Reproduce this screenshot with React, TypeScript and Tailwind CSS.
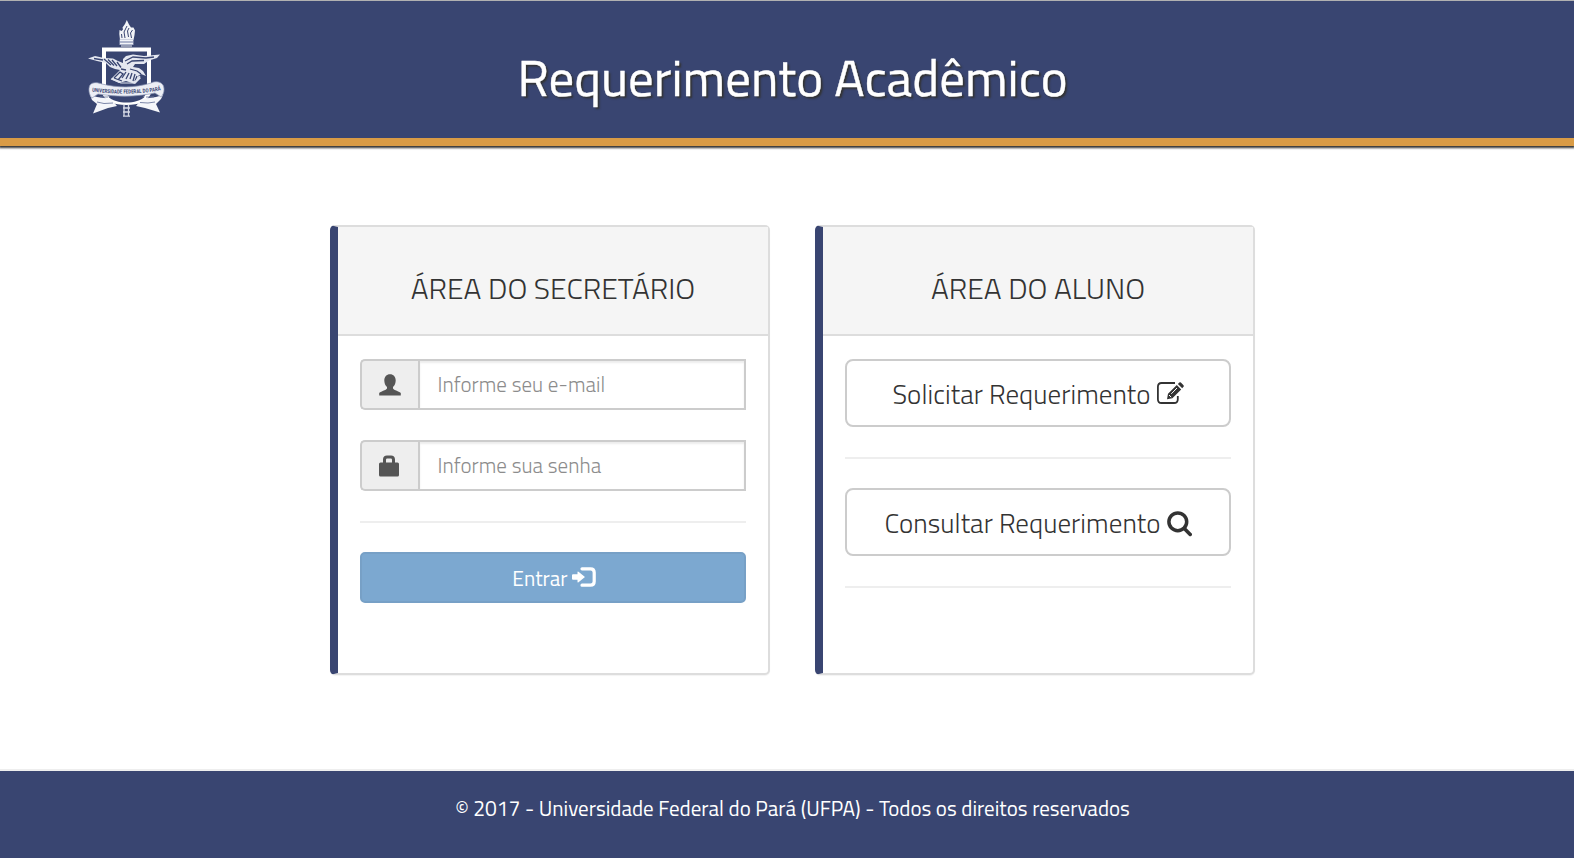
import React from "react";

function Crest() {
  return (
    <svg viewBox="0 0 84 106" className="h-[106px] w-[84px]" fill="none" role="img" aria-label="UFPA">
      {/* torch */}
      <path d="M36 24 35.300 18 35.500 14 37.500 15 39 13.500 38.500 11.500 41 8 42.800 4 45 8.500 47 11.500 49.500 11.500 51 14.500 50.500 19 49.500 24Z" fill="#f2f4f8" />
      <path d="M38 22 37.500 18M41 22 40 16 43 10M44.500 21 43.500 15 45 12M47.500 22 46.500 17 48.500 14" stroke="#394571" strokeWidth="1" />
      <path d="M35.500 23.500h14v5.500h-14z" fill="#aeb5cd" />
      <path d="M36 24.500h13M36 27.500h13M37 30h11" stroke="#f2f4f8" strokeWidth="1" />
      {/* shield */}
      <path d="M20 33.500H65V77C62 84 53 87 42.500 87 32 87 23 84 20 77Z" stroke="#fff" strokeWidth="4" />
      {/* eagle */}
      <path d="M4 42.500 11 40 20 42 29 42.500 34 45 39 47 39 43 42 40 49 38.500 60 40 76 38.500 73 42 65 44.500 60 48 51 48 49 51 55 52 59 55 62 60 57 58 54 60 57 62 51 68 42 65 35 67 27 63 31 59 36 54 31 53 26 51 22 47 13 45Z" fill="#e4e7f0" />
      <path d="m10 42.500 9 1.500M20 43l7 6M24 43.500l6 6M28 44l5 6M33 46l4 5.500M41 45l8-4 13 1 8-1M43 48l5-3 12-.5M37 53l5 1M46 53l7 2 4 3M30 62l6-6 3 2-5 6M42 56l-4 6M45 57l-3 6M48 57l-2 6M51 58l-2 7M30 62l8 3M53 60l-2 5" stroke="#394571" strokeWidth="1.300" />
      <path d="M27 63 37 67 50 67 56 60" stroke="#dfe3ed" strokeWidth="1.200" />
      {/* ribbon tails */}
      <path d="M6 79 13 81 27 83 33 90 24 92 9 97.500 13 88 8 84Z" fill="#f5f6fa" />
      <path d="M79 79 72 81 58 83 52 90 61 92 76 96.500 72 88 77 83Z" fill="#f5f6fa" />
      <path d="M24 80.500C32 88.500 53 88.500 61 80.500 50 83.500 35 83.500 24 80.500Z" fill="#394571" />
      <path d="M13 86 20 87.500 29 87M71 86 64 87 56 86.500M16 81l8 0M70 81l-8 0" stroke="#6f7a9f" strokeWidth=".9" />
      {/* ribbon */}
      <path d="M6 69C9 65.500 14 66.500 18 68 34 72 51 72 67 67 71 65 76 65 79 69 81 73 80 78 77 81L71 77C52 81 33 81 14 78L8 82C5 79 4 73 6 69Z" fill="#eceef5" stroke="#8d96b5" strokeWidth=".7" />
      <path id="motto" d="M8 75.500C29 78.500 56 78.500 78 74" />
      <text fill="#394571" textLength="69" lengthAdjust="spacingAndGlyphs" className="font-['Roboto'] text-[5.500px] font-bold">
        <textPath href="#motto">UNIVERSIDADE FEDERAL DO PARÁ</textPath>
      </text>
      {/* stem */}
      <path d="M40 89v11M44.500 89v11M39 92h7M39 96h7M39 100.200h7" stroke="#d5d9e6" strokeWidth="1.300" />
    </svg>
  );
}

function UserIcon() {
  return (
    <svg viewBox="0 0 22 22" className="h-[22px] w-[22px]" fill="#555">
      <path d="M11 .3C7.500.3 5.300 3 5.300 6.500 5.300 9 6.300 11.500 8 13V14.500C7.500 16 1 17.800.2 19V21.500H21.800V19C21 17.800 14.500 16 14 14.500V13C15.700 11.500 16.700 9 16.700 6.500 16.700 3 14.500.3 11 .3Z" />
    </svg>
  );
}

function LockIcon() {
  return (
    <svg viewBox="0 0 20 22" className="mr-0.5 h-[22px] w-5" fill="#555">
      <path fillRule="evenodd" d="M4 7.500V4.500C4 2 5.500.5 8 .5H12C14.500.5 16 2 16 4.500V7.500H18.500Q20 7.500 20 9V20Q20 21.500 18.500 21.500H1.500Q0 21.500 0 20V9Q0 7.500 1.500 7.500ZM7 7.500H13V4.800Q13 3.500 11.800 3.500H8.200Q7 3.500 7 4.800Z" />
    </svg>
  );
}

function EnterIcon() {
  return (
    <svg viewBox="0 0 24 20" className="-mt-px h-5 w-6" fill="none">
      <path d="M1 7.300H5.500V5.200Q5.500 4 6.500 4.800L13 10 6.500 15.200Q5.500 16 5.500 14.800V12.700H1Q0 12.700 0 11.700V8.300Q0 7.300 1 7.300Z" fill="#fff" />
      <path d="M10 1.800H18.500Q22.200 1.800 22.200 5.500V14.500Q22.200 18.200 18.500 18.200H10" stroke="#fff" strokeWidth="3.200" strokeLinecap="round" />
    </svg>
  );
}

function EditIcon() {
  return (
    <svg viewBox="0 0 27 22" className="h-[22px] w-[27px]" fill="none">
      <path d="M18 1H4.500Q.9 1 .9 4.800V17.200Q.9 21 4.500 21H17Q20.800 21 20.800 17.200V14" stroke="#333" strokeWidth="1.800" />
      <path d="M10 17.200 11 11.800 19.800 3 24.200 7.400 15.400 16.200ZM20.900 2 22.300.6Q23.100-.1 23.900.6L26.500 3.200Q27.200 4 26.500 4.800L25.200 6.300Z" fill="#333" />
      <path d="M12 13 14.200 15.200M14.300 11.800 20 6" stroke="#fff" strokeWidth="1" />
    </svg>
  );
}

function SearchIcon() {
  return (
    <svg viewBox="0 0 25 26" className="mt-[3px] h-[26px] w-[25px]" fill="none" stroke="#333">
      <circle cx="10.800" cy="10.800" r="8.900" strokeWidth="3.500" />
      <path d="M17.300 17.500 23.200 23.400" strokeWidth="3.600" strokeLinecap="round" />
    </svg>
  );
}

function Panel({ title, children }: { title: string; children: React.ReactNode }) {
  return (
    <section className="flex h-[450px] w-[440px] flex-col rounded-[5px] border-2 border-l-8 border-[#ddd] border-l-[#394571] bg-white shadow-[0_1px_1px_rgba(0,0,0,0.05)]">
      <header className="h-[109px] border-b-2 border-[#ddd] bg-[#f5f5f5] pt-[41px] text-center text-[30px] leading-[40px] font-light text-[#333]">
        {title}
      </header>
      <div className="flex flex-col px-[22px] pt-[23px]">{children}</div>
    </section>
  );
}

function Divider() {
  return <hr className="mt-[30px] mb-[29px] border-0 border-t-2 border-[#eee]" />;
}

function Field({ icon, type, placeholder }: { icon: React.ReactNode; type: string; placeholder: string }) {
  return (
    <label className="flex h-[51px]">
      <span className="flex w-[58px] items-center justify-center rounded-l-[5px] border-2 border-r-0 border-[#ccc] bg-[#eee]">{icon}</span>
      <input
        type={type}
        placeholder={placeholder}
        className="min-w-0 flex-1 border-2 border-[#ccc] bg-white px-[17.500px] text-[21px] font-light tracking-[0.060px] text-[#555] shadow-[inset_0_2px_2px_rgba(0,0,0,0.075)] outline-none placeholder:text-[#8c8c8c]"
      />
    </label>
  );
}

export default function App() {
  return (
    <div className="flex h-[858px] flex-col overflow-hidden bg-white font-['Titillium_Web','Roboto',sans-serif]">
      <header className="flex h-[146px] shrink-0 items-start border-t border-b-8 border-t-[#b1b1b1] border-b-[#d99b45] bg-[#394571] shadow-[0_1px_2px_1px_rgba(0,0,0,0.8)]">
        <div className="w-[330px] pt-[15px] pl-[84px]">
          <Crest />
        </div>
        <h1 className="w-[925px] pt-[46px] text-center text-[51px] leading-[60px] font-normal text-white [-webkit-text-stroke:0.4px_#fff] [text-shadow:2px_2px_2px_#333]">
          Requerimento Acadêmico
        </h1>
      </header>

      <main className="flex flex-1 items-start gap-[45px] pt-[79px] pl-[330px]">
        <Panel title="ÁREA DO SECRETÁRIO">
          <div className="flex flex-col gap-[30px]">
            <Field icon={<UserIcon />} type="email" placeholder="Informe seu e-mail" />
            <Field icon={<LockIcon />} type="password" placeholder="Informe sua senha" />
          </div>
          <Divider />
          <button className="flex h-[51px] items-center justify-center gap-1 rounded-[5px] border-2 border-[#77a0c6] bg-[#7ca8d0] pl-0.5 text-[21px] text-white">
            <span className="pt-0.5">Entrar</span>
            <EnterIcon />
          </button>
        </Panel>

        <Panel title="ÁREA DO ALUNO">
          <button className="flex h-[68px] items-center justify-center gap-[6px] rounded-lg border-2 border-[#ccc] bg-white text-[27px] font-light text-[#333]">
            <span className="pt-[3px] tracking-[0.080px]">Solicitar Requerimento</span>
            <EditIcon />
          </button>
          <Divider />
          <button className="flex h-[68px] items-center justify-center gap-[6px] rounded-lg border-2 border-[#ccc] bg-white text-[27px] font-light text-[#333]">
            <span className="pt-[3px] tracking-[0.080px]">Consultar Requerimento</span>
            <SearchIcon />
          </button>
          <Divider />
        </Panel>
      </main>

      <footer className="h-[89px] shrink-0 border-t-2 border-[#eee] bg-[#394571] pt-[22px] text-center text-[21px] leading-[30px] text-white">
        <p className="pl-[11px]">© 2017 - Universidade Federal do Pará (UFPA) - Todos os direitos reservados</p>
      </footer>
    </div>
  );
}
